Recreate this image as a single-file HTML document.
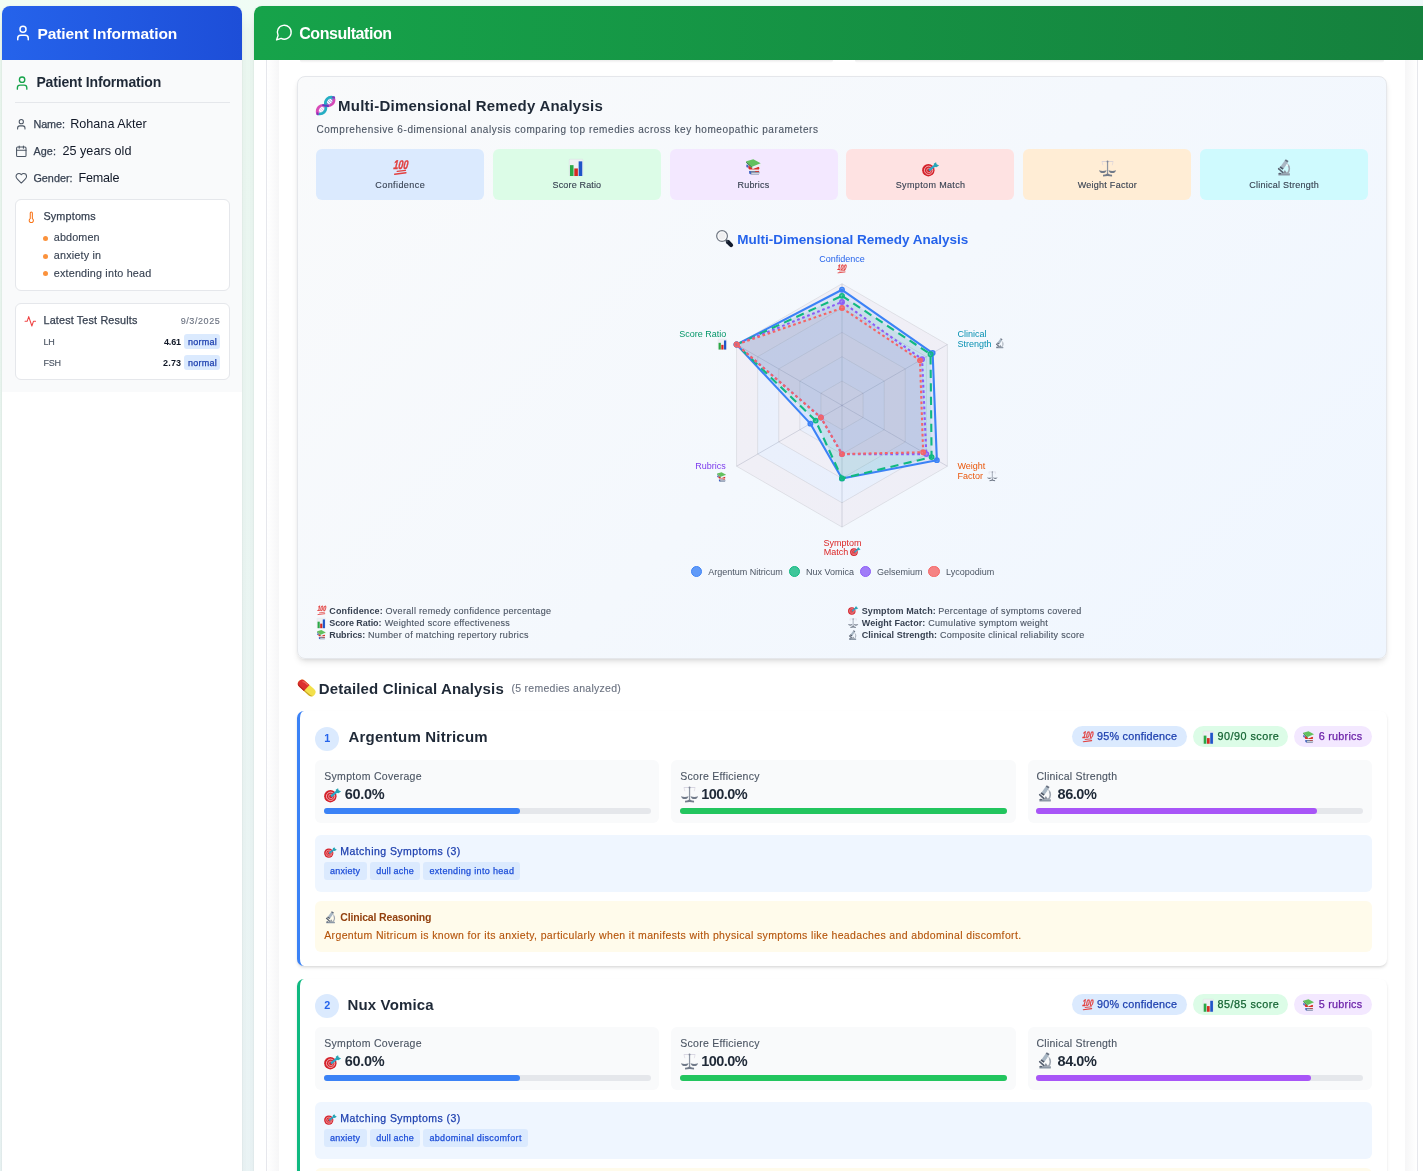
<!DOCTYPE html>
<html lang="en">
<head>
<meta charset="utf-8">
<title>Consultation - Multi-Dimensional Remedy Analysis</title>
<style>
html,body{margin:0;padding:0}
body{width:1423px;height:1171px;overflow:hidden;position:relative;font-family:"Liberation Sans",sans-serif;background:linear-gradient(to bottom right,#f0fdf4 0%,#eff6ff 100%)}
body div,body span.t,body svg{position:absolute}
body div{box-sizing:border-box}
span.t{white-space:pre;line-height:1}
svg{overflow:visible;display:block}
aside,main,section,header,article,ul,li,h1,h2,h3,h4,h5,p{margin:0;padding:0;list-style:none;font:inherit;display:block;position:static}
#app{left:0;top:0;width:1423px;height:1171px;overflow:hidden;will-change:transform}

</style>
</head>
<body>
<div id="app">
<aside>
<div style="left:2px;top:6px;width:240px;height:1200px;background:#fff;border-radius:8px;box-shadow:0 10px 15px -3px rgba(0,0,0,.14),0 4px 6px -4px rgba(0,0,0,.12),0 0 3px rgba(0,0,0,.05);"></div>
<div style="left:2px;top:60px;width:240px;height:332px;background:#f9fafb"></div>
<header>
<div style="left:2px;top:6px;width:240px;height:54px;background:linear-gradient(90deg,#2563eb,#1d4ed8);border-radius:8px 8px 0 0"></div>
<svg style="left:14.2px;top:23.9px" width="18" height="18" viewBox="0 0 24 24" fill="none" stroke="#fff" stroke-width="2" stroke-linecap="round" stroke-linejoin="round"><path d="M19 21v-2a4 4 0 0 0-4-4H9a4 4 0 0 0-4 4v2"/><circle cx="12" cy="7" r="4"/></svg>
<h2>
<span class="t" style="left:37.40px;top:26.00px;font-size:15.5px;color:#fff;font-weight:700;letter-spacing:-0.075px;">Patient Information</span>
</h2>
</header>
<section>
<svg style="left:14.3px;top:74.5px" width="16.2" height="16.2" viewBox="0 0 24 24" fill="none" stroke="#16a34a" stroke-width="2" stroke-linecap="round" stroke-linejoin="round"><path d="M19 21v-2a4 4 0 0 0-4-4H9a4 4 0 0 0-4 4v2"/><circle cx="12" cy="7" r="4"/></svg>
<h3>
<span class="t" style="left:36.40px;top:75.00px;font-size:14px;color:#1f2937;font-weight:700;letter-spacing:-0.150px;">Patient Information</span>
</h3>
<div style="left:15px;top:102px;width:215px;height:1px;background:#e5e7eb"></div>
<svg style="left:14.8px;top:117.85px" width="12.6" height="12.6" viewBox="0 0 24 24" fill="none" stroke="#4b5563" stroke-width="2" stroke-linecap="round" stroke-linejoin="round"><path d="M19 21v-2a4 4 0 0 0-4-4H9a4 4 0 0 0-4 4v2"/><circle cx="12" cy="7" r="4"/></svg>
<span class="t" style="left:33.40px;top:119.00px;font-size:10.8px;color:#374151;-webkit-text-stroke:0.25px currentColor;letter-spacing:-0.050px;">Name:</span>
<span class="t" style="left:70.20px;top:118.00px;font-size:12.6px;color:#111827;letter-spacing:0.017px;">Rohana Akter</span>
<svg style="left:14.8px;top:144.85px" width="12.6" height="12.6" viewBox="0 0 24 24" fill="none" stroke="#4b5563" stroke-width="2" stroke-linecap="round" stroke-linejoin="round"><path d="M8 2v4"/><path d="M16 2v4"/><rect width="18" height="18" x="3" y="4" rx="2"/><path d="M3 10h18"/></svg>
<span class="t" style="left:33.40px;top:146.00px;font-size:10.8px;color:#374151;-webkit-text-stroke:0.25px currentColor;letter-spacing:0.096px;">Age:</span>
<span class="t" style="left:62.40px;top:145.00px;font-size:12.6px;color:#111827;letter-spacing:0.036px;">25 years old</span>
<svg style="left:14.8px;top:171.9px" width="12.6" height="12.6" viewBox="0 0 24 24" fill="none" stroke="#4b5563" stroke-width="2" stroke-linecap="round" stroke-linejoin="round"><path d="M19 14c1.49-1.46 3-3.21 3-5.5A5.5 5.5 0 0 0 16.5 3c-1.76 0-3 .5-4.5 2-1.5-1.5-2.74-2-4.5-2A5.5 5.5 0 0 0 2 8.5c0 2.3 1.5 4.05 3 5.5l7 7Z"/></svg>
<span class="t" style="left:33.40px;top:173.00px;font-size:10.8px;color:#374151;-webkit-text-stroke:0.25px currentColor;letter-spacing:0.031px;">Gender:</span>
<span class="t" style="left:78.40px;top:172.00px;font-size:12.6px;color:#111827;letter-spacing:-0.178px;">Female</span>
</section>
<section>
<div style="left:15.25px;top:199px;width:214.5px;height:92px;background:#fff;border:1px solid #e5e7eb;border-radius:6px"></div>
<svg style="left:24.6px;top:210.6px" width="12.6" height="12.6" viewBox="0 0 24 24" fill="none" stroke="#f97316" stroke-width="2" stroke-linecap="round" stroke-linejoin="round"><path d="M14 4v10.54a4 4 0 1 1-4 0V4a2 2 0 0 1 4 0Z"/></svg>
<h4>
<span class="t" style="left:43.40px;top:211.00px;font-size:10.8px;color:#374151;-webkit-text-stroke:0.25px currentColor;letter-spacing:0.186px;">Symptoms</span>
</h4>
<ul>
<li>
<div style="left:43px;top:235.9px;width:5px;height:5px;background:#fb923c;border-radius:50%"></div>
<span class="t" style="left:53.80px;top:232.00px;font-size:10.8px;color:#374151;-webkit-text-stroke:0.12px currentColor;letter-spacing:0.114px;">abdomen</span>
</li>
<li>
<div style="left:43px;top:253.9px;width:5px;height:5px;background:#fb923c;border-radius:50%"></div>
<span class="t" style="left:53.80px;top:250.00px;font-size:10.8px;color:#374151;-webkit-text-stroke:0.12px currentColor;letter-spacing:0.177px;">anxiety in</span>
</li>
<li>
<div style="left:43px;top:270.9px;width:5px;height:5px;background:#fb923c;border-radius:50%"></div>
<span class="t" style="left:53.80px;top:268.00px;font-size:10.8px;color:#374151;-webkit-text-stroke:0.12px currentColor;letter-spacing:0.175px;">extending into head</span>
</li>
</ul>
</section>
<section>
<div style="left:15.25px;top:303.3px;width:214.5px;height:76.7px;background:#fff;border:1px solid #e5e7eb;border-radius:6px"></div>
<svg style="left:24.2px;top:314.6px" width="12.6" height="12.6" viewBox="0 0 24 24" fill="none" stroke="#ef4444" stroke-width="2" stroke-linecap="round" stroke-linejoin="round"><path d="M22 12h-4l-3 9L9 3l-3 9H2"/></svg>
<h4>
<span class="t" style="left:43.50px;top:315.00px;font-size:10.8px;color:#374151;-webkit-text-stroke:0.25px currentColor;letter-spacing:0.155px;">Latest Test Results</span>
</h4>
<span class="t" style="left:180.70px;top:317.00px;font-size:9px;color:#6b7280;-webkit-text-stroke:0.12px currentColor;letter-spacing:0.582px;">9/3/2025</span>
<span class="t" style="left:43.40px;top:338.00px;font-size:9px;color:#4b5563;-webkit-text-stroke:0.12px currentColor;letter-spacing:-0.105px;">LH</span>
<span class="t" style="left:164.00px;top:338.00px;font-size:9px;color:#111827;font-weight:700;letter-spacing:-0.137px;">4.61</span>
<div style="left:184px;top:334px;width:35.8px;height:14.7px;background:#dbeafe;border-radius:3px"></div>
<span class="t" style="left:187.90px;top:338.00px;font-size:9px;color:#1e40af;-webkit-text-stroke:0.25px currentColor;letter-spacing:0.258px;">normal</span>
<span class="t" style="left:43.40px;top:359.00px;font-size:9px;color:#4b5563;-webkit-text-stroke:0.12px currentColor;letter-spacing:-0.250px;">FSH</span>
<span class="t" style="left:163.00px;top:359.00px;font-size:9px;color:#111827;font-weight:700;letter-spacing:0.196px;">2.73</span>
<div style="left:184px;top:355.2px;width:35.8px;height:14.7px;background:#dbeafe;border-radius:3px"></div>
<span class="t" style="left:187.90px;top:359.00px;font-size:9px;color:#1e40af;-webkit-text-stroke:0.25px currentColor;letter-spacing:0.258px;">normal</span>
</section>
</aside>
<main>
<div style="left:254px;top:6px;width:1200px;height:1200px;background:#fff;border-radius:8px;box-shadow:0 10px 15px -3px rgba(0,0,0,.14),0 4px 6px -4px rgba(0,0,0,.12),0 0 3px rgba(0,0,0,.05);"></div>
<div style="left:266px;top:60px;width:1px;height:1200px;background:#e6e7ec"></div>
<div style="left:1417px;top:60px;width:1px;height:1200px;background:#e6e7ec"></div>
<div style="left:267px;top:60px;width:12px;height:1200px;background:linear-gradient(90deg,#ffffff,#f6f6f7)"></div>
<div style="left:1405px;top:60px;width:12px;height:1200px;background:linear-gradient(270deg,#ffffff,#f6f6f7)"></div>
<div style="left:300px;top:60px;width:533px;height:3px;background:linear-gradient(rgba(0,0,0,.08),rgba(0,0,0,0));border-radius:0 0 4px 4px"></div>
<div style="left:855px;top:60px;width:529px;height:3px;background:linear-gradient(rgba(0,0,0,.08),rgba(0,0,0,0));border-radius:0 0 4px 4px"></div>
<header>
<div style="left:254px;top:6px;width:1200px;height:54px;background:linear-gradient(90deg,#16a34a,#15803d);border-radius:8px 8px 0 0"></div>
<svg style="left:275px;top:23.3px" width="18.5" height="18.5" viewBox="0 0 24 24" fill="none" stroke="#fff" stroke-width="1.75" stroke-linecap="round" stroke-linejoin="round"><path d="M7.9 20A9 9 0 1 0 4 16.1L2 22Z"/></svg>
<h2>
<span class="t" style="left:299.25px;top:26.00px;font-size:16px;color:#fff;font-weight:700;letter-spacing:-0.454px;">Consultation</span>
</h2>
</header>
<section>
<div style="left:297px;top:76px;width:1090px;height:583px;background:linear-gradient(135deg,#f9fafb,#eff6ff);border:1px solid #e5e7eb;border-radius:8px;box-shadow:0 4px 6px -1px rgba(0,0,0,.10),0 2px 4px -2px rgba(0,0,0,.10);"></div>
<svg style="left:316.00px;top:95.90px" width="19.20" height="19.20" viewBox="0 0 36 36" preserveAspectRatio="none"><g transform="rotate(-45 18 18) translate(18 18) scale(0.9 0.97) translate(-18 -18)" fill="none" stroke-linecap="round"><path d="M-6 18 C0 9 12 9 18 18 C12 27 0 27 -6 18Z" fill="#d9b4e6"/><path d="M18 18 C24 9 36 9 42 18 C36 27 24 27 18 18Z" fill="#7f86d6"/><path d="M2 14 V22 M6 12.5 V23.5 M10 13 V23 M26 13 V23 M30 12.5 V23.5 M34 14 V22" stroke="#ffffff" stroke-width="2.7"/><path d="M-6 18 C0 27.5 12 27.5 18 18" stroke="#25aec3" stroke-width="5.2"/><path d="M18 18 C24 27.5 36 27.5 42 18" stroke="#d548b6" stroke-width="5.2"/><path d="M-6 18 C0 8.5 12 8.5 18 18" stroke="#d84bb8" stroke-width="5.2"/><path d="M18 18 C24 8.5 36 8.5 42 18" stroke="#25aec3" stroke-width="5.2"/><path d="M15 14 L21 22" stroke="#5b3fc4" stroke-width="4"/><path d="M-5 17 L-6.5 19.5 M41 16.5 L42.5 19" stroke="#8a2fc0" stroke-width="3.4"/></g></svg>
<h3>
<span class="t" style="left:338.00px;top:98.00px;font-size:15px;color:#1f2937;font-weight:700;letter-spacing:0.243px;">Multi-Dimensional Remedy Analysis</span>
</h3>
<p>
<span class="t" style="left:316.40px;top:125.00px;font-size:10px;color:#4b5563;-webkit-text-stroke:0.12px currentColor;letter-spacing:0.583px;">Comprehensive 6-dimensional analysis comparing top remedies across key homeopathic parameters</span>
</p>
<div style="left:316px;top:149px;width:168px;height:50.5px;background:#dbeafe;border-radius:6px"></div>
<svg style="left:393.10px;top:160.00px" width="15.00" height="15.20" viewBox="0 0 36 36" preserveAspectRatio="none"><text transform="translate(0.5 21.6) scale(0.7 1) skewX(-8)" font-family="Liberation Sans, sans-serif" font-size="30" font-weight="700" font-style="italic" fill="#e2403f" stroke="#e2403f" stroke-width="0.9">100</text><path d="M10 27 L30 24.6" stroke="#e2403f" stroke-width="2.8" stroke-linecap="round"/><path d="M4 33.8 L31 30.4" stroke="#e2403f" stroke-width="3.4" stroke-linecap="round"/></svg>
<span class="t" style="left:375.37px;top:181.00px;font-size:9px;color:#374151;-webkit-text-stroke:0.12px currentColor;letter-spacing:0.416px;">Confidence</span>
<div style="left:492.8px;top:149px;width:168px;height:50.5px;background:#dcfce7;border-radius:6px"></div>
<svg style="left:569.30px;top:159.00px" width="14.20" height="17.00" viewBox="0 0 30 36" preserveAspectRatio="none"><rect x="0.5" y="0.5" width="29" height="35" rx="1.5" fill="#eef0f3" stroke="#d9dce1" stroke-width="1"/><rect x="2" y="13" width="7.6" height="23" fill="#2aa846"/><rect x="11.2" y="20" width="7.6" height="16" fill="#d42a22"/><rect x="20.4" y="5" width="7.6" height="31" fill="#1f55c8"/></svg>
<span class="t" style="left:552.47px;top:181.00px;font-size:9px;color:#374151;-webkit-text-stroke:0.12px currentColor;letter-spacing:0.164px;">Score Ratio</span>
<div style="left:669.6px;top:149px;width:168px;height:50.5px;background:#f3e8ff;border-radius:6px"></div>
<svg style="left:745.80px;top:159.20px" width="15.00" height="15.80" viewBox="0 0 36 38" preserveAspectRatio="none"><path d="M7.5 28.5 H31 Q34 33 31 37.5 H12 Z" fill="#71809c"/><path d="M7.5 28.5 L12 30 V37.5 L7.5 35Z" fill="#3e62c4"/><path d="M13 33 H32 V35.6 H13Z" fill="#e4e7ee"/><path d="M22 28.5 H31 V31 H22Z" fill="#d5332c"/><path d="M7 25.4 H30.5 V28.3 H7Z" fill="#f2f2f4"/><path d="M5.5 15 L15 22 L31 18.5 Q33.5 22 31 25.3 H8 L5.5 22Z" fill="#d92f27"/><path d="M0.8 14 Q3 12 5.5 15 V20.5 Q3 21 0.8 19Z" fill="#3e62c4"/><path d="M15.3 19.6 L35.6 11.2 V16.4 L15.3 24.6Z" fill="#eceff2"/><path d="M0.5 5.4 L14.9 18.9 V22.5 L0.5 8.8Z" fill="#1f7a2d"/><path d="M0.5 5.4 L17.6 0.5 L35.2 10.4 L14.9 18.9Z" fill="#62c05e"/></svg>
<span class="t" style="left:737.49px;top:181.00px;font-size:9px;color:#374151;-webkit-text-stroke:0.12px currentColor;letter-spacing:0.204px;">Rubrics</span>
<div style="left:846.4px;top:149px;width:168px;height:50.5px;background:#fee2e2;border-radius:6px"></div>
<svg style="left:921.80px;top:161.50px" width="17.20" height="14.40" viewBox="0 0 36 30" preserveAspectRatio="none"><circle cx="13.3" cy="17" r="13" fill="#d4212a"/><circle cx="13.8" cy="17.3" r="8.7" fill="none" stroke="#f5c3c6" stroke-width="1.8"/><circle cx="14.4" cy="17.6" r="4.7" fill="none" stroke="#f3b9bd" stroke-width="1.5"/><path d="M16 16.5 L28 6.5" stroke="#2aa6c9" stroke-width="4.6" stroke-linecap="round"/><path d="M24.5 3.5 L29.5 0.5 L30.5 4.5 L35.8 7.5 L30 11 L26 10Z" fill="#27a5b4"/></svg>
<span class="t" style="left:895.70px;top:181.00px;font-size:9px;color:#374151;-webkit-text-stroke:0.12px currentColor;letter-spacing:0.367px;">Symptom Match</span>
<div style="left:1023.2px;top:149px;width:168px;height:50.5px;background:#ffedd5;border-radius:6px"></div>
<svg style="left:1098.90px;top:159.60px" width="17.10" height="16.50" viewBox="0 0 36 35" preserveAspectRatio="none"><path d="M18 3 V29" stroke="#8d95a3" stroke-width="2.6"/><path d="M6 3.2 H30" stroke="#c9c6d6" stroke-width="1.4"/><path d="M6.5 3.5 L8 11 M29.5 3.5 L28 11" stroke="#d5cfdc" stroke-width="1.2"/><path d="M0 21.5 Q8 25 16 21.5 Q14 27.6 8 27.6 Q2 27.6 0 21.5Z M20 21.5 Q28 25 36 21.5 Q34 27.6 28 27.6 Q22 27.6 20 21.5Z" fill="#717a89"/><path d="M18 26 Q18 31 27.5 31.5 V35 Q18 32.5 8.5 35 V31.5 Q18 31 18 26Z" fill="#727b8a"/><circle cx="18" cy="3.2" r="2" fill="#7f8795"/></svg>
<span class="t" style="left:1077.65px;top:181.00px;font-size:9px;color:#374151;-webkit-text-stroke:0.12px currentColor;letter-spacing:0.269px;">Weight Factor</span>
<div style="left:1200px;top:149px;width:168px;height:50.5px;background:#cffafe;border-radius:6px"></div>
<svg style="left:1278.30px;top:159.20px" width="12.20" height="16.70" viewBox="0 0 26 36" preserveAspectRatio="none"><path d="M1 31 H25 Q26 33.5 25 35.5 H1 Q0 33 1 31Z" fill="#8c98a6"/><path d="M10.5 31 L14.5 23.5 L19.5 31Z" fill="#8b939e"/><path d="M19.5 11 C26 16 25.5 26 19.5 31.5" fill="none" stroke="#9ea6b1" stroke-width="3.4"/><path d="M14.5 3.5 L21 8 L12 20.5 L5.5 16Z" fill="#a9b7c4"/><path d="M16.5 0.5 L22.5 4.5 L20.3 7.8 L14.3 3.8Z" fill="#667080"/><path d="M5 15.5 L12 20 L10 23 L3 18.5Z" fill="#4f5868"/><ellipse cx="19.5" cy="13.5" rx="2.2" ry="2" fill="#f4f6f8"/><path d="M1.5 21 L10 29" stroke="#566070" stroke-width="3.6" stroke-linecap="round"/><ellipse cx="4" cy="31.5" rx="3" ry="1.8" fill="#596273"/></svg>
<span class="t" style="left:1249.13px;top:181.00px;font-size:9px;color:#374151;-webkit-text-stroke:0.12px currentColor;letter-spacing:0.263px;">Clinical Strength</span>
<svg style="left:660px;top:225px" width="370" height="365" viewBox="660 225 370 365" font-family="Liberation Sans, sans-serif" font-size="9"><path d="M842.00 283.70 L947.40 344.55 L947.40 466.25 L842.00 527.10 L736.60 466.25 L736.60 344.55Z M842.00 308.04 L926.32 356.72 L926.32 454.08 L842.00 502.76 L757.68 454.08 L757.68 356.72Z" fill="rgba(205,130,160,0.07)" fill-rule="evenodd"/><polygon points="842.00,283.70 947.40,344.55 947.40,466.25 842.00,527.10 736.60,466.25 736.60,344.55" fill="none" stroke="rgba(0,0,0,0.09)" stroke-width="0.9"/><path d="M842.00 308.04 L926.32 356.72 L926.32 454.08 L842.00 502.76 L757.68 454.08 L757.68 356.72Z M842.00 332.38 L905.24 368.89 L905.24 441.91 L842.00 478.42 L778.76 441.91 L778.76 368.89Z" fill="rgba(120,140,240,0.07)" fill-rule="evenodd"/><polygon points="842.00,308.04 926.32,356.72 926.32,454.08 842.00,502.76 757.68,454.08 757.68,356.72" fill="none" stroke="rgba(0,0,0,0.09)" stroke-width="0.9"/><path d="M842.00 332.38 L905.24 368.89 L905.24 441.91 L842.00 478.42 L778.76 441.91 L778.76 368.89Z M842.00 356.72 L884.16 381.06 L884.16 429.74 L842.00 454.08 L799.84 429.74 L799.84 381.06Z" fill="rgba(205,130,160,0.07)" fill-rule="evenodd"/><polygon points="842.00,332.38 905.24,368.89 905.24,441.91 842.00,478.42 778.76,441.91 778.76,368.89" fill="none" stroke="rgba(0,0,0,0.09)" stroke-width="0.9"/><path d="M842.00 356.72 L884.16 381.06 L884.16 429.74 L842.00 454.08 L799.84 429.74 L799.84 381.06Z M842.00 381.06 L863.08 393.23 L863.08 417.57 L842.00 429.74 L820.92 417.57 L820.92 393.23Z" fill="rgba(120,140,240,0.07)" fill-rule="evenodd"/><polygon points="842.00,356.72 884.16,381.06 884.16,429.74 842.00,454.08 799.84,429.74 799.84,381.06" fill="none" stroke="rgba(0,0,0,0.09)" stroke-width="0.9"/><path d="M842.00 381.06 L863.08 393.23 L863.08 417.57 L842.00 429.74 L820.92 417.57 L820.92 393.23Z" fill="rgba(205,130,160,0.07)" fill-rule="evenodd"/><polygon points="842.00,381.06 863.08,393.23 863.08,417.57 842.00,429.74 820.92,417.57 820.92,393.23" fill="none" stroke="rgba(0,0,0,0.09)" stroke-width="0.9"/><line x1="842.0" y1="405.4" x2="842.00" y2="283.70" stroke="rgba(30,40,80,0.17)" stroke-width="0.9"/><line x1="842.0" y1="405.4" x2="947.40" y2="344.55" stroke="rgba(30,40,80,0.17)" stroke-width="0.9"/><line x1="842.0" y1="405.4" x2="947.40" y2="466.25" stroke="rgba(30,40,80,0.17)" stroke-width="0.9"/><line x1="842.0" y1="405.4" x2="842.00" y2="527.10" stroke="rgba(30,40,80,0.17)" stroke-width="0.9"/><line x1="842.0" y1="405.4" x2="736.60" y2="466.25" stroke="rgba(30,40,80,0.17)" stroke-width="0.9"/><line x1="842.0" y1="405.4" x2="736.60" y2="344.55" stroke="rgba(30,40,80,0.17)" stroke-width="0.9"/><polygon points="842.00,289.78 932.64,353.07 936.86,460.16 842.00,478.42 810.38,423.65 736.60,344.55" fill="rgba(59,130,246,0.1)" stroke="#3b82f6" stroke-width="2.1" stroke-linejoin="round"/><circle cx="842.00" cy="289.78" r="2.2" fill="rgba(59,130,246,0.55)" stroke="#3b82f6" stroke-width="1.5"/><circle cx="932.64" cy="353.07" r="2.2" fill="rgba(59,130,246,0.55)" stroke="#3b82f6" stroke-width="1.5"/><circle cx="936.86" cy="460.16" r="2.2" fill="rgba(59,130,246,0.55)" stroke="#3b82f6" stroke-width="1.5"/><circle cx="842.00" cy="478.42" r="2.2" fill="rgba(59,130,246,0.55)" stroke="#3b82f6" stroke-width="1.5"/><circle cx="810.38" cy="423.65" r="2.2" fill="rgba(59,130,246,0.55)" stroke="#3b82f6" stroke-width="1.5"/><circle cx="736.60" cy="344.55" r="2.2" fill="rgba(59,130,246,0.55)" stroke="#3b82f6" stroke-width="1.5"/><polygon points="842.00,295.87 930.53,354.29 931.59,457.12 842.00,478.42 815.65,420.61 736.60,344.55" fill="rgba(16,185,129,0.1)" stroke="#10b981" stroke-width="2.1" stroke-linejoin="round" stroke-dasharray="8.2 5.3"/><circle cx="842.00" cy="295.87" r="2.2" fill="rgba(16,185,129,0.55)" stroke="#10b981" stroke-width="1.5"/><circle cx="930.53" cy="354.29" r="2.2" fill="rgba(16,185,129,0.55)" stroke="#10b981" stroke-width="1.5"/><circle cx="931.59" cy="457.12" r="2.2" fill="rgba(16,185,129,0.55)" stroke="#10b981" stroke-width="1.5"/><circle cx="842.00" cy="478.42" r="2.2" fill="rgba(16,185,129,0.55)" stroke="#10b981" stroke-width="1.5"/><circle cx="815.65" cy="420.61" r="2.2" fill="rgba(16,185,129,0.55)" stroke="#10b981" stroke-width="1.5"/><circle cx="736.60" cy="344.55" r="2.2" fill="rgba(16,185,129,0.55)" stroke="#10b981" stroke-width="1.5"/><polygon points="842.00,301.95 922.10,359.15 926.32,454.08 842.00,454.08 820.92,417.57 736.60,344.55" fill="rgba(139,92,246,0.09)" stroke="#8b5cf6" stroke-width="2.1" stroke-linejoin="round" stroke-dasharray="2.7 2.7"/><circle cx="842.00" cy="301.95" r="2.2" fill="rgba(139,92,246,0.55)" stroke="#8b5cf6" stroke-width="1.5"/><circle cx="922.10" cy="359.15" r="2.2" fill="rgba(139,92,246,0.55)" stroke="#8b5cf6" stroke-width="1.5"/><circle cx="926.32" cy="454.08" r="2.2" fill="rgba(139,92,246,0.55)" stroke="#8b5cf6" stroke-width="1.5"/><circle cx="842.00" cy="454.08" r="2.2" fill="rgba(139,92,246,0.55)" stroke="#8b5cf6" stroke-width="1.5"/><circle cx="820.92" cy="417.57" r="2.2" fill="rgba(139,92,246,0.55)" stroke="#8b5cf6" stroke-width="1.5"/><circle cx="736.60" cy="344.55" r="2.2" fill="rgba(139,92,246,0.55)" stroke="#8b5cf6" stroke-width="1.5"/><polygon points="842.00,308.04 919.99,360.37 923.15,452.25 842.00,454.08 820.92,417.57 736.60,344.55" fill="rgba(245,101,101,0.06)" stroke="#f56565" stroke-width="2.1" stroke-linejoin="round" stroke-dasharray="2.7 2.7"/><circle cx="842.00" cy="308.04" r="2.2" fill="rgba(245,101,101,0.55)" stroke="#f56565" stroke-width="1.5"/><circle cx="919.99" cy="360.37" r="2.2" fill="rgba(245,101,101,0.55)" stroke="#f56565" stroke-width="1.5"/><circle cx="923.15" cy="452.25" r="2.2" fill="rgba(245,101,101,0.55)" stroke="#f56565" stroke-width="1.5"/><circle cx="842.00" cy="454.08" r="2.2" fill="rgba(245,101,101,0.55)" stroke="#f56565" stroke-width="1.5"/><circle cx="820.92" cy="417.57" r="2.2" fill="rgba(245,101,101,0.55)" stroke="#f56565" stroke-width="1.5"/><circle cx="736.60" cy="344.55" r="2.2" fill="rgba(245,101,101,0.55)" stroke="#f56565" stroke-width="1.5"/></svg>
<svg style="left:716.00px;top:230.20px" width="17.00" height="16.70" viewBox="0 0 36 35.4" preserveAspectRatio="none"><path d="M25 25 L32 32" stroke="#111a2c" stroke-width="8.6" stroke-linecap="round"/><path d="M21 21 L25 25" stroke="#3a4352" stroke-width="4"/><circle cx="12.8" cy="12.8" r="11.4" fill="#ffffff" stroke="#727985" stroke-width="2.6"/><circle cx="12.8" cy="12.8" r="7.8" fill="#efeff1"/></svg>
<span class="t" style="left:737.25px;top:233.00px;font-size:13.5px;color:#2563eb;font-weight:700;letter-spacing:-0.009px;">Multi-Dimensional Remedy Analysis</span>
<span class="t" style="left:819.24px;top:255.00px;font-size:9px;color:#2563eb;">Confidence</span>
<svg style="left:837.40px;top:263.60px" width="9.30" height="9.42" viewBox="0 0 36 36" preserveAspectRatio="none"><text transform="translate(0.5 21.6) scale(0.7 1) skewX(-8)" font-family="Liberation Sans, sans-serif" font-size="30" font-weight="700" font-style="italic" fill="#e2403f" stroke="#e2403f" stroke-width="0.9">100</text><path d="M10 27 L30 24.6" stroke="#e2403f" stroke-width="2.8" stroke-linecap="round"/><path d="M4 33.8 L31 30.4" stroke="#e2403f" stroke-width="3.4" stroke-linecap="round"/></svg>
<span class="t" style="left:679.23px;top:330.00px;font-size:9px;color:#059669;">Score Ratio</span>
<svg style="left:717.60px;top:338.90px" width="8.80" height="10.54" viewBox="0 0 30 36" preserveAspectRatio="none"><rect x="0.5" y="0.5" width="29" height="35" rx="1.5" fill="#eef0f3" stroke="#d9dce1" stroke-width="1"/><rect x="2" y="13" width="7.6" height="23" fill="#2aa846"/><rect x="11.2" y="20" width="7.6" height="16" fill="#d42a22"/><rect x="20.4" y="5" width="7.6" height="31" fill="#1f55c8"/></svg>
<span class="t" style="left:957.50px;top:330.00px;font-size:9px;color:#0891b2;">Clinical</span>
<span class="t" style="left:957.50px;top:340.00px;font-size:9px;color:#0891b2;">Strength</span>
<svg style="left:995.60px;top:338.20px" width="7.56" height="10.35" viewBox="0 0 26 36" preserveAspectRatio="none"><path d="M1 31 H25 Q26 33.5 25 35.5 H1 Q0 33 1 31Z" fill="#8c98a6"/><path d="M10.5 31 L14.5 23.5 L19.5 31Z" fill="#8b939e"/><path d="M19.5 11 C26 16 25.5 26 19.5 31.5" fill="none" stroke="#9ea6b1" stroke-width="3.4"/><path d="M14.5 3.5 L21 8 L12 20.5 L5.5 16Z" fill="#a9b7c4"/><path d="M16.5 0.5 L22.5 4.5 L20.3 7.8 L14.3 3.8Z" fill="#667080"/><path d="M5 15.5 L12 20 L10 23 L3 18.5Z" fill="#4f5868"/><ellipse cx="19.5" cy="13.5" rx="2.2" ry="2" fill="#f4f6f8"/><path d="M1.5 21 L10 29" stroke="#566070" stroke-width="3.6" stroke-linecap="round"/><ellipse cx="4" cy="31.5" rx="3" ry="1.8" fill="#596273"/></svg>
<span class="t" style="left:695.24px;top:462.00px;font-size:9px;color:#7c3aed;">Rubrics</span>
<svg style="left:717.00px;top:472.00px" width="9.30" height="9.80" viewBox="0 0 36 38" preserveAspectRatio="none"><path d="M7.5 28.5 H31 Q34 33 31 37.5 H12 Z" fill="#71809c"/><path d="M7.5 28.5 L12 30 V37.5 L7.5 35Z" fill="#3e62c4"/><path d="M13 33 H32 V35.6 H13Z" fill="#e4e7ee"/><path d="M22 28.5 H31 V31 H22Z" fill="#d5332c"/><path d="M7 25.4 H30.5 V28.3 H7Z" fill="#f2f2f4"/><path d="M5.5 15 L15 22 L31 18.5 Q33.5 22 31 25.3 H8 L5.5 22Z" fill="#d92f27"/><path d="M0.8 14 Q3 12 5.5 15 V20.5 Q3 21 0.8 19Z" fill="#3e62c4"/><path d="M15.3 19.6 L35.6 11.2 V16.4 L15.3 24.6Z" fill="#eceff2"/><path d="M0.5 5.4 L14.9 18.9 V22.5 L0.5 8.8Z" fill="#1f7a2d"/><path d="M0.5 5.4 L17.6 0.5 L35.2 10.4 L14.9 18.9Z" fill="#62c05e"/></svg>
<span class="t" style="left:957.50px;top:462.00px;font-size:9px;color:#ea580c;">Weight</span>
<span class="t" style="left:957.50px;top:472.00px;font-size:9px;color:#ea580c;">Factor</span>
<svg style="left:986.50px;top:470.90px" width="10.60" height="10.23" viewBox="0 0 36 35" preserveAspectRatio="none"><path d="M18 3 V29" stroke="#8d95a3" stroke-width="2.6"/><path d="M6 3.2 H30" stroke="#c9c6d6" stroke-width="1.4"/><path d="M6.5 3.5 L8 11 M29.5 3.5 L28 11" stroke="#d5cfdc" stroke-width="1.2"/><path d="M0 21.5 Q8 25 16 21.5 Q14 27.6 8 27.6 Q2 27.6 0 21.5Z M20 21.5 Q28 25 36 21.5 Q34 27.6 28 27.6 Q22 27.6 20 21.5Z" fill="#717a89"/><path d="M18 26 Q18 31 27.5 31.5 V35 Q18 32.5 8.5 35 V31.5 Q18 31 18 26Z" fill="#727b8a"/><circle cx="18" cy="3.2" r="2" fill="#7f8795"/></svg>
<span class="t" style="left:823.54px;top:539.00px;font-size:9px;color:#dc2626;">Symptom</span>
<span class="t" style="left:823.80px;top:548.00px;font-size:9px;color:#dc2626;">Match</span>
<svg style="left:849.80px;top:547.20px" width="10.66" height="8.93" viewBox="0 0 36 30" preserveAspectRatio="none"><circle cx="13.3" cy="17" r="13" fill="#d4212a"/><circle cx="13.8" cy="17.3" r="8.7" fill="none" stroke="#f5c3c6" stroke-width="1.8"/><circle cx="14.4" cy="17.6" r="4.7" fill="none" stroke="#f3b9bd" stroke-width="1.5"/><path d="M16 16.5 L28 6.5" stroke="#2aa6c9" stroke-width="4.6" stroke-linecap="round"/><path d="M24.5 3.5 L29.5 0.5 L30.5 4.5 L35.8 7.5 L30 11 L26 10Z" fill="#27a5b4"/></svg>
<div style="left:690.9px;top:565.9px;width:11.6px;height:11.6px;background:rgba(59,130,246,0.8);border:1.8px solid #3b82f6;border-radius:50%"></div>
<span class="t" style="left:708.30px;top:568.00px;font-size:9px;color:#4b5563;">Argentum Nitricum</span>
<div style="left:788.5px;top:565.9px;width:11.6px;height:11.6px;background:rgba(16,185,129,0.8);border:1.8px solid #10b981;border-radius:50%"></div>
<span class="t" style="left:806.00px;top:568.00px;font-size:9px;color:#4b5563;">Nux Vomica</span>
<div style="left:859.7px;top:565.9px;width:11.6px;height:11.6px;background:rgba(139,92,246,0.8);border:1.8px solid #8b5cf6;border-radius:50%"></div>
<span class="t" style="left:877.10px;top:568.00px;font-size:9px;color:#4b5563;">Gelsemium</span>
<div style="left:928.2px;top:565.9px;width:11.6px;height:11.6px;background:rgba(245,101,101,0.8);border:1.8px solid #f56565;border-radius:50%"></div>
<span class="t" style="left:946.00px;top:568.00px;font-size:9px;color:#4b5563;">Lycopodium</span>
<p>
<svg style="left:317.20px;top:606.09px" width="9.00" height="9.12" viewBox="0 0 36 36" preserveAspectRatio="none"><text transform="translate(0.5 21.6) scale(0.7 1) skewX(-8)" font-family="Liberation Sans, sans-serif" font-size="30" font-weight="700" font-style="italic" fill="#e2403f" stroke="#e2403f" stroke-width="0.9">100</text><path d="M10 27 L30 24.6" stroke="#e2403f" stroke-width="2.8" stroke-linecap="round"/><path d="M4 33.8 L31 30.4" stroke="#e2403f" stroke-width="3.4" stroke-linecap="round"/></svg>
<span class="t" style="left:329.25px;top:607.00px;font-size:9px;color:#374151;font-weight:700;letter-spacing:0.150px;">Confidence:</span>
<span class="t" style="left:385.50px;top:607.00px;font-size:9px;color:#4b5563;-webkit-text-stroke:0.12px currentColor;letter-spacing:0.312px;">Overall remedy confidence percentage</span>
</p>
<p>
<svg style="left:317.44px;top:617.55px" width="8.52" height="10.20" viewBox="0 0 30 36" preserveAspectRatio="none"><rect x="0.5" y="0.5" width="29" height="35" rx="1.5" fill="#eef0f3" stroke="#d9dce1" stroke-width="1"/><rect x="2" y="13" width="7.6" height="23" fill="#2aa846"/><rect x="11.2" y="20" width="7.6" height="16" fill="#d42a22"/><rect x="20.4" y="5" width="7.6" height="31" fill="#1f55c8"/></svg>
<span class="t" style="left:329.25px;top:619.00px;font-size:9px;color:#374151;font-weight:700;letter-spacing:-0.069px;">Score Ratio:</span>
<span class="t" style="left:384.75px;top:619.00px;font-size:9px;color:#4b5563;-webkit-text-stroke:0.12px currentColor;letter-spacing:0.288px;">Weighted score effectiveness</span>
</p>
<p>
<svg style="left:317.20px;top:629.91px" width="9.00" height="9.48" viewBox="0 0 36 38" preserveAspectRatio="none"><path d="M7.5 28.5 H31 Q34 33 31 37.5 H12 Z" fill="#71809c"/><path d="M7.5 28.5 L12 30 V37.5 L7.5 35Z" fill="#3e62c4"/><path d="M13 33 H32 V35.6 H13Z" fill="#e4e7ee"/><path d="M22 28.5 H31 V31 H22Z" fill="#d5332c"/><path d="M7 25.4 H30.5 V28.3 H7Z" fill="#f2f2f4"/><path d="M5.5 15 L15 22 L31 18.5 Q33.5 22 31 25.3 H8 L5.5 22Z" fill="#d92f27"/><path d="M0.8 14 Q3 12 5.5 15 V20.5 Q3 21 0.8 19Z" fill="#3e62c4"/><path d="M15.3 19.6 L35.6 11.2 V16.4 L15.3 24.6Z" fill="#eceff2"/><path d="M0.5 5.4 L14.9 18.9 V22.5 L0.5 8.8Z" fill="#1f7a2d"/><path d="M0.5 5.4 L17.6 0.5 L35.2 10.4 L14.9 18.9Z" fill="#62c05e"/></svg>
<span class="t" style="left:329.25px;top:631.00px;font-size:9px;color:#374151;font-weight:700;letter-spacing:-0.073px;">Rubrics:</span>
<span class="t" style="left:368.00px;top:631.00px;font-size:9px;color:#4b5563;-webkit-text-stroke:0.12px currentColor;letter-spacing:0.327px;">Number of matching repertory rubrics</span>
</p>
<p>
<svg style="left:847.74px;top:606.33px" width="10.32" height="8.64" viewBox="0 0 36 30" preserveAspectRatio="none"><circle cx="13.3" cy="17" r="13" fill="#d4212a"/><circle cx="13.8" cy="17.3" r="8.7" fill="none" stroke="#f5c3c6" stroke-width="1.8"/><circle cx="14.4" cy="17.6" r="4.7" fill="none" stroke="#f3b9bd" stroke-width="1.5"/><path d="M16 16.5 L28 6.5" stroke="#2aa6c9" stroke-width="4.6" stroke-linecap="round"/><path d="M24.5 3.5 L29.5 0.5 L30.5 4.5 L35.8 7.5 L30 11 L26 10Z" fill="#27a5b4"/></svg>
<span class="t" style="left:861.75px;top:607.00px;font-size:9px;color:#374151;font-weight:700;letter-spacing:0.115px;">Symptom Match:</span>
<span class="t" style="left:938.25px;top:607.00px;font-size:9px;color:#4b5563;-webkit-text-stroke:0.12px currentColor;letter-spacing:0.308px;">Percentage of symptoms covered</span>
</p>
<p>
<svg style="left:847.77px;top:617.70px" width="10.26" height="9.90" viewBox="0 0 36 35" preserveAspectRatio="none"><path d="M18 3 V29" stroke="#8d95a3" stroke-width="2.6"/><path d="M6 3.2 H30" stroke="#c9c6d6" stroke-width="1.4"/><path d="M6.5 3.5 L8 11 M29.5 3.5 L28 11" stroke="#d5cfdc" stroke-width="1.2"/><path d="M0 21.5 Q8 25 16 21.5 Q14 27.6 8 27.6 Q2 27.6 0 21.5Z M20 21.5 Q28 25 36 21.5 Q34 27.6 28 27.6 Q22 27.6 20 21.5Z" fill="#717a89"/><path d="M18 26 Q18 31 27.5 31.5 V35 Q18 32.5 8.5 35 V31.5 Q18 31 18 26Z" fill="#727b8a"/><circle cx="18" cy="3.2" r="2" fill="#7f8795"/></svg>
<span class="t" style="left:861.75px;top:619.00px;font-size:9px;color:#374151;font-weight:700;letter-spacing:0.051px;">Weight Factor:</span>
<span class="t" style="left:928.25px;top:619.00px;font-size:9px;color:#4b5563;-webkit-text-stroke:0.12px currentColor;letter-spacing:0.290px;">Cumulative symptom weight</span>
</p>
<p>
<svg style="left:849.24px;top:629.64px" width="7.32" height="10.02" viewBox="0 0 26 36" preserveAspectRatio="none"><path d="M1 31 H25 Q26 33.5 25 35.5 H1 Q0 33 1 31Z" fill="#8c98a6"/><path d="M10.5 31 L14.5 23.5 L19.5 31Z" fill="#8b939e"/><path d="M19.5 11 C26 16 25.5 26 19.5 31.5" fill="none" stroke="#9ea6b1" stroke-width="3.4"/><path d="M14.5 3.5 L21 8 L12 20.5 L5.5 16Z" fill="#a9b7c4"/><path d="M16.5 0.5 L22.5 4.5 L20.3 7.8 L14.3 3.8Z" fill="#667080"/><path d="M5 15.5 L12 20 L10 23 L3 18.5Z" fill="#4f5868"/><ellipse cx="19.5" cy="13.5" rx="2.2" ry="2" fill="#f4f6f8"/><path d="M1.5 21 L10 29" stroke="#566070" stroke-width="3.6" stroke-linecap="round"/><ellipse cx="4" cy="31.5" rx="3" ry="1.8" fill="#596273"/></svg>
<span class="t" style="left:861.75px;top:631.00px;font-size:9px;color:#374151;font-weight:700;letter-spacing:0.044px;">Clinical Strength:</span>
<span class="t" style="left:940.00px;top:631.00px;font-size:9px;color:#4b5563;-webkit-text-stroke:0.12px currentColor;letter-spacing:0.277px;">Composite clinical reliability score</span>
</p>
</section>
<section>
<svg style="left:297.80px;top:679.40px" width="17.40" height="17.90" viewBox="0 0 36 37" preserveAspectRatio="none"><g transform="rotate(42 18 18.5)"><rect x="-3.5" y="10" width="43" height="17" rx="8.5" fill="#f3e04b"/><path d="M18 10 H5 A8.5 8.5 0 0 0 5 27 H18Z" fill="#dc2f2f"/><path d="M18 27 H31 A8.5 8.5 0 0 0 38.5 22.5 Q35.5 24.6 31 24.6 H18Z" fill="#c9a425"/><path d="M18 27 H5 A8.5 8.5 0 0 1 -2.5 22.5 Q0.5 24.6 5 24.6 H18Z" fill="#b3231f"/><path d="M3.5 14.5 Q5.5 12.5 9 12.5 H15" fill="none" stroke="#ef6f62" stroke-width="2" stroke-linecap="round"/></g></svg>
<h3>
<span class="t" style="left:318.75px;top:681.00px;font-size:15px;color:#1f2937;font-weight:700;letter-spacing:0.154px;">Detailed Clinical Analysis</span>
</h3>
<span class="t" style="left:511.50px;top:683.00px;font-size:10.5px;color:#6b7280;-webkit-text-stroke:0.12px currentColor;letter-spacing:0.268px;">(5 remedies analyzed)</span>
<article>
<div style="left:297px;top:711.25px;width:1090px;height:255px;background:#fff;border-radius:7px;border-left:3.6px solid #3b82f6;box-shadow:0 2px 3px rgba(0,0,0,.11),0 1px 2px -1px rgba(0,0,0,.10);"></div>
<div style="left:315.25px;top:726.75px;width:24px;height:24px;background:#dbeafe;border-radius:50%"></div>
<span class="t" style="left:324.25px;top:733.00px;font-size:10.8px;color:#2563eb;font-weight:700;">1</span>
<h4>
<span class="t" style="left:348.50px;top:729.00px;font-size:15px;color:#1f2937;font-weight:700;letter-spacing:0.203px;">Argentum Nitricum</span>
</h4>
<div style="left:1072px;top:725.75px;width:115px;height:21px;background:#dbeafe;border-radius:10.5px"></div>
<svg style="left:1082.00px;top:731.25px" width="11.25" height="11.40" viewBox="0 0 36 36" preserveAspectRatio="none"><text transform="translate(0.5 21.6) scale(0.7 1) skewX(-8)" font-family="Liberation Sans, sans-serif" font-size="30" font-weight="700" font-style="italic" fill="#e2403f" stroke="#e2403f" stroke-width="0.9">100</text><path d="M10 27 L30 24.6" stroke="#e2403f" stroke-width="2.8" stroke-linecap="round"/><path d="M4 33.8 L31 30.4" stroke="#e2403f" stroke-width="3.4" stroke-linecap="round"/></svg>
<span class="t" style="left:1097.00px;top:731.00px;font-size:10.8px;color:#1e40af;-webkit-text-stroke:0.25px currentColor;letter-spacing:0.244px;">95% confidence</span>
<div style="left:1192.75px;top:725.75px;width:95px;height:21px;background:#dcfce7;border-radius:10.5px"></div>
<svg style="left:1202.75px;top:730.50px" width="10.65" height="12.75" viewBox="0 0 30 36" preserveAspectRatio="none"><rect x="0.5" y="0.5" width="29" height="35" rx="1.5" fill="#eef0f3" stroke="#d9dce1" stroke-width="1"/><rect x="2" y="13" width="7.6" height="23" fill="#2aa846"/><rect x="11.2" y="20" width="7.6" height="16" fill="#d42a22"/><rect x="20.4" y="5" width="7.6" height="31" fill="#1f55c8"/></svg>
<span class="t" style="left:1217.50px;top:731.00px;font-size:10.8px;color:#166534;-webkit-text-stroke:0.25px currentColor;letter-spacing:0.483px;">90/90 score</span>
<div style="left:1293.75px;top:725.75px;width:77.75px;height:21px;background:#f3e8ff;border-radius:10.5px"></div>
<svg style="left:1303.00px;top:730.75px" width="11.25" height="11.85" viewBox="0 0 36 38" preserveAspectRatio="none"><path d="M7.5 28.5 H31 Q34 33 31 37.5 H12 Z" fill="#71809c"/><path d="M7.5 28.5 L12 30 V37.5 L7.5 35Z" fill="#3e62c4"/><path d="M13 33 H32 V35.6 H13Z" fill="#e4e7ee"/><path d="M22 28.5 H31 V31 H22Z" fill="#d5332c"/><path d="M7 25.4 H30.5 V28.3 H7Z" fill="#f2f2f4"/><path d="M5.5 15 L15 22 L31 18.5 Q33.5 22 31 25.3 H8 L5.5 22Z" fill="#d92f27"/><path d="M0.8 14 Q3 12 5.5 15 V20.5 Q3 21 0.8 19Z" fill="#3e62c4"/><path d="M15.3 19.6 L35.6 11.2 V16.4 L15.3 24.6Z" fill="#eceff2"/><path d="M0.5 5.4 L14.9 18.9 V22.5 L0.5 8.8Z" fill="#1f7a2d"/><path d="M0.5 5.4 L17.6 0.5 L35.2 10.4 L14.9 18.9Z" fill="#62c05e"/></svg>
<span class="t" style="left:1318.75px;top:731.00px;font-size:10.8px;color:#6b21a8;-webkit-text-stroke:0.25px currentColor;letter-spacing:0.250px;">6 rubrics</span>
<div style="left:315.25px;top:760px;width:343.5px;height:62.5px;background:#f9fafb;border-radius:6px"></div>
<span class="t" style="left:324.25px;top:771.00px;font-size:10.5px;color:#4b5563;-webkit-text-stroke:0.12px currentColor;letter-spacing:0.303px;">Symptom Coverage</span>
<svg style="left:324.00px;top:787.50px" width="17.20" height="14.40" viewBox="0 0 36 30" preserveAspectRatio="none"><circle cx="13.3" cy="17" r="13" fill="#d4212a"/><circle cx="13.8" cy="17.3" r="8.7" fill="none" stroke="#f5c3c6" stroke-width="1.8"/><circle cx="14.4" cy="17.6" r="4.7" fill="none" stroke="#f3b9bd" stroke-width="1.5"/><path d="M16 16.5 L28 6.5" stroke="#2aa6c9" stroke-width="4.6" stroke-linecap="round"/><path d="M24.5 3.5 L29.5 0.5 L30.5 4.5 L35.8 7.5 L30 11 L26 10Z" fill="#27a5b4"/></svg>
<span class="t" style="left:344.75px;top:787.00px;font-size:14.5px;color:#1f2937;font-weight:700;letter-spacing:-0.305px;">60.0%</span>
<div style="left:324px;top:807.75px;width:326.5px;height:6px;background:#e5e7eb;border-radius:3px"></div>
<div style="left:324px;top:807.75px;width:195.9px;height:6px;background:#3b82f6;border-radius:3px"></div>
<div style="left:671.25px;top:760px;width:344.25px;height:62.5px;background:#f9fafb;border-radius:6px"></div>
<span class="t" style="left:680.25px;top:771.00px;font-size:10.5px;color:#4b5563;-webkit-text-stroke:0.12px currentColor;letter-spacing:0.277px;">Score Efficiency</span>
<svg style="left:680.75px;top:785.75px" width="17.10" height="16.50" viewBox="0 0 36 35" preserveAspectRatio="none"><path d="M18 3 V29" stroke="#8d95a3" stroke-width="2.6"/><path d="M6 3.2 H30" stroke="#c9c6d6" stroke-width="1.4"/><path d="M6.5 3.5 L8 11 M29.5 3.5 L28 11" stroke="#d5cfdc" stroke-width="1.2"/><path d="M0 21.5 Q8 25 16 21.5 Q14 27.6 8 27.6 Q2 27.6 0 21.5Z M20 21.5 Q28 25 36 21.5 Q34 27.6 28 27.6 Q22 27.6 20 21.5Z" fill="#717a89"/><path d="M18 26 Q18 31 27.5 31.5 V35 Q18 32.5 8.5 35 V31.5 Q18 31 18 26Z" fill="#727b8a"/><circle cx="18" cy="3.2" r="2" fill="#7f8795"/></svg>
<span class="t" style="left:701.25px;top:787.00px;font-size:14.5px;color:#1f2937;font-weight:700;letter-spacing:-0.557px;">100.0%</span>
<div style="left:680px;top:807.75px;width:326.5px;height:6px;background:#e5e7eb;border-radius:3px"></div>
<div style="left:680px;top:807.75px;width:326.5px;height:6px;background:#22c55e;border-radius:3px"></div>
<div style="left:1027.5px;top:760px;width:344px;height:62.5px;background:#f9fafb;border-radius:6px"></div>
<span class="t" style="left:1036.50px;top:771.00px;font-size:10.5px;color:#4b5563;-webkit-text-stroke:0.12px currentColor;letter-spacing:0.259px;">Clinical Strength</span>
<svg style="left:1039.20px;top:785.25px" width="12.20" height="16.70" viewBox="0 0 26 36" preserveAspectRatio="none"><path d="M1 31 H25 Q26 33.5 25 35.5 H1 Q0 33 1 31Z" fill="#8c98a6"/><path d="M10.5 31 L14.5 23.5 L19.5 31Z" fill="#8b939e"/><path d="M19.5 11 C26 16 25.5 26 19.5 31.5" fill="none" stroke="#9ea6b1" stroke-width="3.4"/><path d="M14.5 3.5 L21 8 L12 20.5 L5.5 16Z" fill="#a9b7c4"/><path d="M16.5 0.5 L22.5 4.5 L20.3 7.8 L14.3 3.8Z" fill="#667080"/><path d="M5 15.5 L12 20 L10 23 L3 18.5Z" fill="#4f5868"/><ellipse cx="19.5" cy="13.5" rx="2.2" ry="2" fill="#f4f6f8"/><path d="M1.5 21 L10 29" stroke="#566070" stroke-width="3.6" stroke-linecap="round"/><ellipse cx="4" cy="31.5" rx="3" ry="1.8" fill="#596273"/></svg>
<span class="t" style="left:1057.50px;top:787.00px;font-size:14.5px;color:#1f2937;font-weight:700;letter-spacing:-0.430px;">86.0%</span>
<div style="left:1036.25px;top:807.75px;width:326.5px;height:6px;background:#e5e7eb;border-radius:3px"></div>
<div style="left:1036.25px;top:807.75px;width:280.79px;height:6px;background:#a855f7;border-radius:3px"></div>
<div style="left:315.25px;top:835px;width:1056.25px;height:56.75px;background:#eff6ff;border-radius:6px"></div>
<svg style="left:324.00px;top:847.15px" width="12.90" height="10.80" viewBox="0 0 36 30" preserveAspectRatio="none"><circle cx="13.3" cy="17" r="13" fill="#d4212a"/><circle cx="13.8" cy="17.3" r="8.7" fill="none" stroke="#f5c3c6" stroke-width="1.8"/><circle cx="14.4" cy="17.6" r="4.7" fill="none" stroke="#f3b9bd" stroke-width="1.5"/><path d="M16 16.5 L28 6.5" stroke="#2aa6c9" stroke-width="4.6" stroke-linecap="round"/><path d="M24.5 3.5 L29.5 0.5 L30.5 4.5 L35.8 7.5 L30 11 L26 10Z" fill="#27a5b4"/></svg>
<h5>
<span class="t" style="left:340.25px;top:846.00px;font-size:10.5px;color:#1e40af;-webkit-text-stroke:0.25px currentColor;letter-spacing:0.457px;">Matching Symptoms (3)</span>
</h5>
<div style="left:324px;top:862px;width:42.7px;height:18px;background:#dbeafe;border-radius:3px"></div>
<span class="t" style="left:330.00px;top:867.00px;font-size:9px;color:#1d4ed8;-webkit-text-stroke:0.25px currentColor;letter-spacing:0.247px;">anxiety</span>
<div style="left:370.2px;top:862px;width:49.7px;height:18px;background:#dbeafe;border-radius:3px"></div>
<span class="t" style="left:376.20px;top:867.00px;font-size:9px;color:#1d4ed8;-webkit-text-stroke:0.25px currentColor;letter-spacing:0.185px;">dull ache</span>
<div style="left:423.4px;top:862px;width:96.7px;height:18px;background:#dbeafe;border-radius:3px"></div>
<span class="t" style="left:429.40px;top:867.00px;font-size:9px;color:#1d4ed8;-webkit-text-stroke:0.25px currentColor;letter-spacing:0.330px;">extending into head</span>
<div style="left:315.25px;top:901.25px;width:1056.25px;height:50.5px;background:#fffbeb;border-radius:6px"></div>
<svg style="left:326.00px;top:911.25px" width="9.15" height="12.52" viewBox="0 0 26 36" preserveAspectRatio="none"><path d="M1 31 H25 Q26 33.5 25 35.5 H1 Q0 33 1 31Z" fill="#8c98a6"/><path d="M10.5 31 L14.5 23.5 L19.5 31Z" fill="#8b939e"/><path d="M19.5 11 C26 16 25.5 26 19.5 31.5" fill="none" stroke="#9ea6b1" stroke-width="3.4"/><path d="M14.5 3.5 L21 8 L12 20.5 L5.5 16Z" fill="#a9b7c4"/><path d="M16.5 0.5 L22.5 4.5 L20.3 7.8 L14.3 3.8Z" fill="#667080"/><path d="M5 15.5 L12 20 L10 23 L3 18.5Z" fill="#4f5868"/><ellipse cx="19.5" cy="13.5" rx="2.2" ry="2" fill="#f4f6f8"/><path d="M1.5 21 L10 29" stroke="#566070" stroke-width="3.6" stroke-linecap="round"/><ellipse cx="4" cy="31.5" rx="3" ry="1.8" fill="#596273"/></svg>
<h5>
<span class="t" style="left:340.25px;top:912.00px;font-size:10.5px;color:#92400e;font-weight:700;letter-spacing:-0.163px;">Clinical Reasoning</span>
</h5>
<p>
<span class="t" style="left:324.25px;top:930.00px;font-size:10.5px;color:#b45309;-webkit-text-stroke:0.12px currentColor;letter-spacing:0.360px;">Argentum Nitricum is known for its anxiety, particularly when it manifests with physical symptoms like headaches and abdominal discomfort.</span>
</p>
</article>
<article>
<div style="left:297px;top:979.25px;width:1090px;height:255px;background:#fff;border-radius:7px;border-left:3.6px solid #10b981;box-shadow:0 2px 3px rgba(0,0,0,.11),0 1px 2px -1px rgba(0,0,0,.10);"></div>
<div style="left:315.25px;top:993.75px;width:24px;height:24px;background:#dbeafe;border-radius:50%"></div>
<span class="t" style="left:324.25px;top:1000.00px;font-size:10.8px;color:#2563eb;font-weight:700;">2</span>
<h4>
<span class="t" style="left:347.50px;top:997.00px;font-size:15px;color:#1f2937;font-weight:700;letter-spacing:0.149px;">Nux Vomica</span>
</h4>
<div style="left:1072px;top:993.75px;width:115px;height:21px;background:#dbeafe;border-radius:10.5px"></div>
<svg style="left:1082.00px;top:999.25px" width="11.25" height="11.40" viewBox="0 0 36 36" preserveAspectRatio="none"><text transform="translate(0.5 21.6) scale(0.7 1) skewX(-8)" font-family="Liberation Sans, sans-serif" font-size="30" font-weight="700" font-style="italic" fill="#e2403f" stroke="#e2403f" stroke-width="0.9">100</text><path d="M10 27 L30 24.6" stroke="#e2403f" stroke-width="2.8" stroke-linecap="round"/><path d="M4 33.8 L31 30.4" stroke="#e2403f" stroke-width="3.4" stroke-linecap="round"/></svg>
<span class="t" style="left:1097.00px;top:999.00px;font-size:10.8px;color:#1e40af;-webkit-text-stroke:0.25px currentColor;letter-spacing:0.244px;">90% confidence</span>
<div style="left:1192.75px;top:993.75px;width:95px;height:21px;background:#dcfce7;border-radius:10.5px"></div>
<svg style="left:1202.75px;top:998.50px" width="10.65" height="12.75" viewBox="0 0 30 36" preserveAspectRatio="none"><rect x="0.5" y="0.5" width="29" height="35" rx="1.5" fill="#eef0f3" stroke="#d9dce1" stroke-width="1"/><rect x="2" y="13" width="7.6" height="23" fill="#2aa846"/><rect x="11.2" y="20" width="7.6" height="16" fill="#d42a22"/><rect x="20.4" y="5" width="7.6" height="31" fill="#1f55c8"/></svg>
<span class="t" style="left:1217.50px;top:999.00px;font-size:10.8px;color:#166534;-webkit-text-stroke:0.25px currentColor;letter-spacing:0.483px;">85/85 score</span>
<div style="left:1293.75px;top:993.75px;width:77.75px;height:21px;background:#f3e8ff;border-radius:10.5px"></div>
<svg style="left:1303.00px;top:998.75px" width="11.25" height="11.85" viewBox="0 0 36 38" preserveAspectRatio="none"><path d="M7.5 28.5 H31 Q34 33 31 37.5 H12 Z" fill="#71809c"/><path d="M7.5 28.5 L12 30 V37.5 L7.5 35Z" fill="#3e62c4"/><path d="M13 33 H32 V35.6 H13Z" fill="#e4e7ee"/><path d="M22 28.5 H31 V31 H22Z" fill="#d5332c"/><path d="M7 25.4 H30.5 V28.3 H7Z" fill="#f2f2f4"/><path d="M5.5 15 L15 22 L31 18.5 Q33.5 22 31 25.3 H8 L5.5 22Z" fill="#d92f27"/><path d="M0.8 14 Q3 12 5.5 15 V20.5 Q3 21 0.8 19Z" fill="#3e62c4"/><path d="M15.3 19.6 L35.6 11.2 V16.4 L15.3 24.6Z" fill="#eceff2"/><path d="M0.5 5.4 L14.9 18.9 V22.5 L0.5 8.8Z" fill="#1f7a2d"/><path d="M0.5 5.4 L17.6 0.5 L35.2 10.4 L14.9 18.9Z" fill="#62c05e"/></svg>
<span class="t" style="left:1318.75px;top:999.00px;font-size:10.8px;color:#6b21a8;-webkit-text-stroke:0.25px currentColor;letter-spacing:0.250px;">5 rubrics</span>
<div style="left:315.25px;top:1027px;width:343.5px;height:62.5px;background:#f9fafb;border-radius:6px"></div>
<span class="t" style="left:324.25px;top:1038.00px;font-size:10.5px;color:#4b5563;-webkit-text-stroke:0.12px currentColor;letter-spacing:0.303px;">Symptom Coverage</span>
<svg style="left:324.00px;top:1054.50px" width="17.20" height="14.40" viewBox="0 0 36 30" preserveAspectRatio="none"><circle cx="13.3" cy="17" r="13" fill="#d4212a"/><circle cx="13.8" cy="17.3" r="8.7" fill="none" stroke="#f5c3c6" stroke-width="1.8"/><circle cx="14.4" cy="17.6" r="4.7" fill="none" stroke="#f3b9bd" stroke-width="1.5"/><path d="M16 16.5 L28 6.5" stroke="#2aa6c9" stroke-width="4.6" stroke-linecap="round"/><path d="M24.5 3.5 L29.5 0.5 L30.5 4.5 L35.8 7.5 L30 11 L26 10Z" fill="#27a5b4"/></svg>
<span class="t" style="left:344.75px;top:1054.00px;font-size:14.5px;color:#1f2937;font-weight:700;letter-spacing:-0.305px;">60.0%</span>
<div style="left:324px;top:1074.75px;width:326.5px;height:6px;background:#e5e7eb;border-radius:3px"></div>
<div style="left:324px;top:1074.75px;width:195.9px;height:6px;background:#3b82f6;border-radius:3px"></div>
<div style="left:671.25px;top:1027px;width:344.25px;height:62.5px;background:#f9fafb;border-radius:6px"></div>
<span class="t" style="left:680.25px;top:1038.00px;font-size:10.5px;color:#4b5563;-webkit-text-stroke:0.12px currentColor;letter-spacing:0.277px;">Score Efficiency</span>
<svg style="left:680.75px;top:1052.75px" width="17.10" height="16.50" viewBox="0 0 36 35" preserveAspectRatio="none"><path d="M18 3 V29" stroke="#8d95a3" stroke-width="2.6"/><path d="M6 3.2 H30" stroke="#c9c6d6" stroke-width="1.4"/><path d="M6.5 3.5 L8 11 M29.5 3.5 L28 11" stroke="#d5cfdc" stroke-width="1.2"/><path d="M0 21.5 Q8 25 16 21.5 Q14 27.6 8 27.6 Q2 27.6 0 21.5Z M20 21.5 Q28 25 36 21.5 Q34 27.6 28 27.6 Q22 27.6 20 21.5Z" fill="#717a89"/><path d="M18 26 Q18 31 27.5 31.5 V35 Q18 32.5 8.5 35 V31.5 Q18 31 18 26Z" fill="#727b8a"/><circle cx="18" cy="3.2" r="2" fill="#7f8795"/></svg>
<span class="t" style="left:701.25px;top:1054.00px;font-size:14.5px;color:#1f2937;font-weight:700;letter-spacing:-0.557px;">100.0%</span>
<div style="left:680px;top:1074.75px;width:326.5px;height:6px;background:#e5e7eb;border-radius:3px"></div>
<div style="left:680px;top:1074.75px;width:326.5px;height:6px;background:#22c55e;border-radius:3px"></div>
<div style="left:1027.5px;top:1027px;width:344px;height:62.5px;background:#f9fafb;border-radius:6px"></div>
<span class="t" style="left:1036.50px;top:1038.00px;font-size:10.5px;color:#4b5563;-webkit-text-stroke:0.12px currentColor;letter-spacing:0.259px;">Clinical Strength</span>
<svg style="left:1039.20px;top:1052.25px" width="12.20" height="16.70" viewBox="0 0 26 36" preserveAspectRatio="none"><path d="M1 31 H25 Q26 33.5 25 35.5 H1 Q0 33 1 31Z" fill="#8c98a6"/><path d="M10.5 31 L14.5 23.5 L19.5 31Z" fill="#8b939e"/><path d="M19.5 11 C26 16 25.5 26 19.5 31.5" fill="none" stroke="#9ea6b1" stroke-width="3.4"/><path d="M14.5 3.5 L21 8 L12 20.5 L5.5 16Z" fill="#a9b7c4"/><path d="M16.5 0.5 L22.5 4.5 L20.3 7.8 L14.3 3.8Z" fill="#667080"/><path d="M5 15.5 L12 20 L10 23 L3 18.5Z" fill="#4f5868"/><ellipse cx="19.5" cy="13.5" rx="2.2" ry="2" fill="#f4f6f8"/><path d="M1.5 21 L10 29" stroke="#566070" stroke-width="3.6" stroke-linecap="round"/><ellipse cx="4" cy="31.5" rx="3" ry="1.8" fill="#596273"/></svg>
<span class="t" style="left:1057.50px;top:1054.00px;font-size:14.5px;color:#1f2937;font-weight:700;letter-spacing:-0.430px;">84.0%</span>
<div style="left:1036.25px;top:1074.75px;width:326.5px;height:6px;background:#e5e7eb;border-radius:3px"></div>
<div style="left:1036.25px;top:1074.75px;width:274.26px;height:6px;background:#a855f7;border-radius:3px"></div>
<div style="left:315.25px;top:1102px;width:1056.25px;height:56.75px;background:#eff6ff;border-radius:6px"></div>
<svg style="left:324.00px;top:1114.15px" width="12.90" height="10.80" viewBox="0 0 36 30" preserveAspectRatio="none"><circle cx="13.3" cy="17" r="13" fill="#d4212a"/><circle cx="13.8" cy="17.3" r="8.7" fill="none" stroke="#f5c3c6" stroke-width="1.8"/><circle cx="14.4" cy="17.6" r="4.7" fill="none" stroke="#f3b9bd" stroke-width="1.5"/><path d="M16 16.5 L28 6.5" stroke="#2aa6c9" stroke-width="4.6" stroke-linecap="round"/><path d="M24.5 3.5 L29.5 0.5 L30.5 4.5 L35.8 7.5 L30 11 L26 10Z" fill="#27a5b4"/></svg>
<h5>
<span class="t" style="left:340.25px;top:1113.00px;font-size:10.5px;color:#1e40af;-webkit-text-stroke:0.25px currentColor;letter-spacing:0.457px;">Matching Symptoms (3)</span>
</h5>
<div style="left:324px;top:1129px;width:42.7px;height:18px;background:#dbeafe;border-radius:3px"></div>
<span class="t" style="left:330.00px;top:1134.00px;font-size:9px;color:#1d4ed8;-webkit-text-stroke:0.25px currentColor;letter-spacing:0.247px;">anxiety</span>
<div style="left:370.2px;top:1129px;width:49.7px;height:18px;background:#dbeafe;border-radius:3px"></div>
<span class="t" style="left:376.20px;top:1134.00px;font-size:9px;color:#1d4ed8;-webkit-text-stroke:0.25px currentColor;letter-spacing:0.185px;">dull ache</span>
<div style="left:423.4px;top:1129px;width:104.7px;height:18px;background:#dbeafe;border-radius:3px"></div>
<span class="t" style="left:429.40px;top:1134.00px;font-size:9px;color:#1d4ed8;-webkit-text-stroke:0.25px currentColor;letter-spacing:0.340px;">abdominal discomfort</span>
<div style="left:315.25px;top:1168.25px;width:1056.25px;height:50.5px;background:#fffbeb;border-radius:6px"></div>
<svg style="left:326.00px;top:1178.25px" width="9.15" height="12.52" viewBox="0 0 26 36" preserveAspectRatio="none"><path d="M1 31 H25 Q26 33.5 25 35.5 H1 Q0 33 1 31Z" fill="#8c98a6"/><path d="M10.5 31 L14.5 23.5 L19.5 31Z" fill="#8b939e"/><path d="M19.5 11 C26 16 25.5 26 19.5 31.5" fill="none" stroke="#9ea6b1" stroke-width="3.4"/><path d="M14.5 3.5 L21 8 L12 20.5 L5.5 16Z" fill="#a9b7c4"/><path d="M16.5 0.5 L22.5 4.5 L20.3 7.8 L14.3 3.8Z" fill="#667080"/><path d="M5 15.5 L12 20 L10 23 L3 18.5Z" fill="#4f5868"/><ellipse cx="19.5" cy="13.5" rx="2.2" ry="2" fill="#f4f6f8"/><path d="M1.5 21 L10 29" stroke="#566070" stroke-width="3.6" stroke-linecap="round"/><ellipse cx="4" cy="31.5" rx="3" ry="1.8" fill="#596273"/></svg>
<h5>
<span class="t" style="left:340.25px;top:1179.00px;font-size:10.5px;color:#92400e;font-weight:700;letter-spacing:-0.163px;">Clinical Reasoning</span>
</h5>
<p>
<span class="t" style="left:324.25px;top:1197.00px;font-size:10.5px;color:#b45309;-webkit-text-stroke:0.12px currentColor;">Nux Vomica suits irritable, driven patients with anxiety, dull aching pains and abdominal discomfort that is worse after eating.</span>
</p>
</article>
</section>
</main>
</div>
</body>
</html>
